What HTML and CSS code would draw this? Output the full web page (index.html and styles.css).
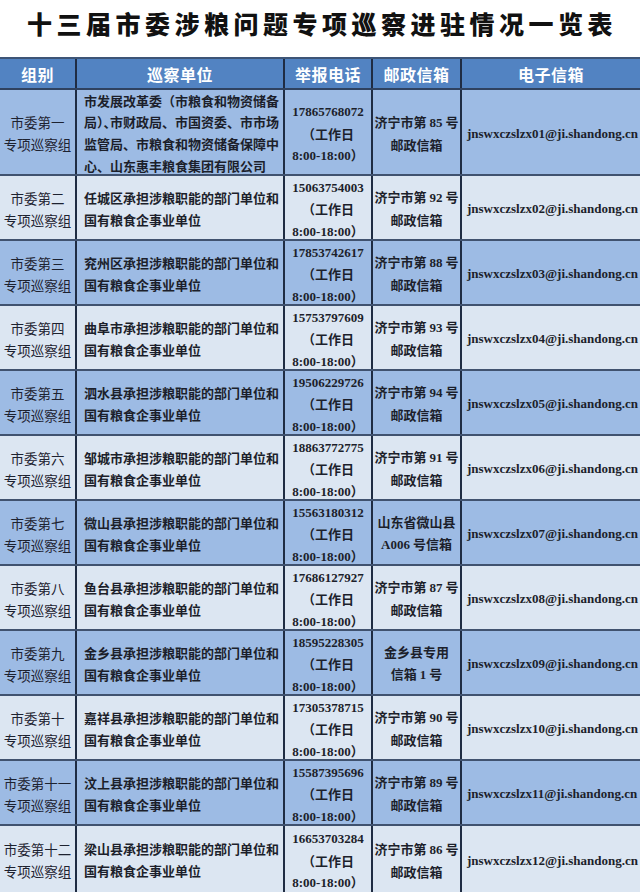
FILE: index.html
```html
<!DOCTYPE html>
<html lang="zh-CN">
<head>
<meta charset="utf-8">
<title>十三届市委涉粮问题专项巡察进驻情况一览表</title>
<link rel="stylesheet" href="styles.css">
</head>
<body>
<h1 class="title">十三届市委涉粮问题专项巡察进驻情况一览表</h1>
<div class="sheet">
  <div class="row head">
    <div class="cell"><div>组别</div></div>
    <div class="cell"><div>巡察单位</div></div>
    <div class="cell"><div>举报电话</div></div>
    <div class="cell"><div>邮政信箱</div></div>
    <div class="cell"><div>电子信箱</div></div>
  </div>

  <div class="row odd first">
    <div class="cell grp"><div>市委第一<br>专项巡察组</div></div>
    <div class="cell unit"><div>市发展改革委（市粮食和物资储备<br>局<span class="halt">）、</span>市财政局、市国资委、市市场<br>监管局、市粮食和物资储备保障中<br>心、山东惠丰粮食集团有限公司</div></div>
    <div class="cell tel"><div><span class="num">17865768072</span><br>（工作日<br><span class="num">8:00-18:00</span>）</div></div>
    <div class="cell post"><div>济宁市第 <span class="num">85</span> 号<br>邮政信箱</div></div>
    <div class="cell mail"><div>jnswxczslzx01@ji.shandong.cn</div></div>
  </div>

  <div class="row even">
    <div class="cell grp"><div>市委第二<br>专项巡察组</div></div>
    <div class="cell unit"><div>任城区承担涉粮职能的部门单位和<br>国有粮食企事业单位</div></div>
    <div class="cell tel"><div><span class="num">15063754003</span><br>（工作日<br><span class="num">8:00-18:00</span>）</div></div>
    <div class="cell post"><div>济宁市第 <span class="num">92</span> 号<br>邮政信箱</div></div>
    <div class="cell mail"><div>jnswxczslzx02@ji.shandong.cn</div></div>
  </div>

  <div class="row odd">
    <div class="cell grp"><div>市委第三<br>专项巡察组</div></div>
    <div class="cell unit"><div>兖州区承担涉粮职能的部门单位和<br>国有粮食企事业单位</div></div>
    <div class="cell tel"><div><span class="num">17853742617</span><br>（工作日<br><span class="num">8:00-18:00</span>）</div></div>
    <div class="cell post"><div>济宁市第 <span class="num">88</span> 号<br>邮政信箱</div></div>
    <div class="cell mail"><div>jnswxczslzx03@ji.shandong.cn</div></div>
  </div>

  <div class="row even">
    <div class="cell grp"><div>市委第四<br>专项巡察组</div></div>
    <div class="cell unit"><div>曲阜市承担涉粮职能的部门单位和<br>国有粮食企事业单位</div></div>
    <div class="cell tel"><div><span class="num">15753797609</span><br>（工作日<br><span class="num">8:00-18:00</span>）</div></div>
    <div class="cell post"><div>济宁市第 <span class="num">93</span> 号<br>邮政信箱</div></div>
    <div class="cell mail"><div>jnswxczslzx04@ji.shandong.cn</div></div>
  </div>

  <div class="row odd">
    <div class="cell grp"><div>市委第五<br>专项巡察组</div></div>
    <div class="cell unit"><div>泗水县承担涉粮职能的部门单位和<br>国有粮食企事业单位</div></div>
    <div class="cell tel"><div><span class="num">19506229726</span><br>（工作日<br><span class="num">8:00-18:00</span>）</div></div>
    <div class="cell post"><div>济宁市第 <span class="num">94</span> 号<br>邮政信箱</div></div>
    <div class="cell mail"><div>jnswxczslzx05@ji.shandong.cn</div></div>
  </div>

  <div class="row even">
    <div class="cell grp"><div>市委第六<br>专项巡察组</div></div>
    <div class="cell unit"><div>邹城市承担涉粮职能的部门单位和<br>国有粮食企事业单位</div></div>
    <div class="cell tel"><div><span class="num">18863772775</span><br>（工作日<br><span class="num">8:00-18:00</span>）</div></div>
    <div class="cell post"><div>济宁市第 <span class="num">91</span> 号<br>邮政信箱</div></div>
    <div class="cell mail"><div>jnswxczslzx06@ji.shandong.cn</div></div>
  </div>

  <div class="row odd">
    <div class="cell grp"><div>市委第七<br>专项巡察组</div></div>
    <div class="cell unit"><div>微山县承担涉粮职能的部门单位和<br>国有粮食企事业单位</div></div>
    <div class="cell tel"><div><span class="num">15563180312</span><br>（工作日<br><span class="num">8:00-18:00</span>）</div></div>
    <div class="cell post"><div>山东省微山县<br><span class="num">A006</span> 号信箱</div></div>
    <div class="cell mail"><div>jnswxczslzx07@ji.shandong.cn</div></div>
  </div>

  <div class="row even">
    <div class="cell grp"><div>市委第八<br>专项巡察组</div></div>
    <div class="cell unit"><div>鱼台县承担涉粮职能的部门单位和<br>国有粮食企事业单位</div></div>
    <div class="cell tel"><div><span class="num">17686127927</span><br>（工作日<br><span class="num">8:00-18:00</span>）</div></div>
    <div class="cell post"><div>济宁市第 <span class="num">87</span> 号<br>邮政信箱</div></div>
    <div class="cell mail"><div>jnswxczslzx08@ji.shandong.cn</div></div>
  </div>

  <div class="row odd">
    <div class="cell grp"><div>市委第九<br>专项巡察组</div></div>
    <div class="cell unit"><div>金乡县承担涉粮职能的部门单位和<br>国有粮食企事业单位</div></div>
    <div class="cell tel"><div><span class="num">18595228305</span><br>（工作日<br><span class="num">8:00-18:00</span>）</div></div>
    <div class="cell post"><div>金乡县专用<br>信箱 <span class="num">1</span> 号</div></div>
    <div class="cell mail"><div>jnswxczslzx09@ji.shandong.cn</div></div>
  </div>

  <div class="row even">
    <div class="cell grp"><div>市委第十<br>专项巡察组</div></div>
    <div class="cell unit"><div>嘉祥县承担涉粮职能的部门单位和<br>国有粮食企事业单位</div></div>
    <div class="cell tel"><div><span class="num">17305378715</span><br>（工作日<br><span class="num">8:00-18:00</span>）</div></div>
    <div class="cell post"><div>济宁市第 <span class="num">90</span> 号<br>邮政信箱</div></div>
    <div class="cell mail"><div>jnswxczslzx10@ji.shandong.cn</div></div>
  </div>

  <div class="row odd">
    <div class="cell grp"><div>市委第十一<br>专项巡察组</div></div>
    <div class="cell unit"><div>汶上县承担涉粮职能的部门单位和<br>国有粮食企事业单位</div></div>
    <div class="cell tel"><div><span class="num">15587395696</span><br>（工作日<br><span class="num">8:00-18:00</span>）</div></div>
    <div class="cell post"><div>济宁市第 <span class="num">89</span> 号<br>邮政信箱</div></div>
    <div class="cell mail"><div>jnswxczslzx11@ji.shandong.cn</div></div>
  </div>

  <div class="row even last">
    <div class="cell grp"><div>市委第十二<br>专项巡察组</div></div>
    <div class="cell unit"><div>梁山县承担涉粮职能的部门单位和<br>国有粮食企事业单位</div></div>
    <div class="cell tel"><div><span class="num">16653703284</span><br>（工作日<br><span class="num">8:00-18:00</span>）</div></div>
    <div class="cell post"><div>济宁市第 <span class="num">86</span> 号<br>邮政信箱</div></div>
    <div class="cell mail"><div>jnswxczslzx12@ji.shandong.cn</div></div>
  </div>
</div>
</body>
</html>
```
FILE: styles.css
```css
html, body {
  margin: 0;
  padding: 0;
  background: #ffffff;
}
body {
  width: 640px;
  font-family: "Noto Sans CJK SC", "Noto Sans", sans-serif;
  color: #1b1d24;
}
.title {
  margin: 0;
  height: 57px;
  box-sizing: border-box;
  padding: 7px 0 0 4px;
  font-size: 25px;
  line-height: 32px;
  font-weight: 900;
  letter-spacing: 4.5px;
  text-align: center;
  color: #111111;
  white-space: nowrap;
}
.sheet {
  display: flex;
  flex-direction: column;
}
.row {
  display: grid;
  grid-template-columns: 77px 208px 88px 89px 1fr;
  height: 65px;
  flex-shrink: 0;
  box-sizing: border-box;
  border-bottom: 2px solid #40526f;
}
.row.head {
  height: 33px;
  background: #5283c2;
  border-top: 2px solid #3e5577;
  border-bottom: 2px solid #2f4260;
}
.row.first {
  height: 86px;
}
.row.last {
  height: 66px;
  border-bottom: none;
}
.row.odd {
  background: #9dbbe4;
}
.row.even {
  background: #dce6f2;
}
.cell {
  border-right: 2px solid #1f2c43;
  display: flex;
  align-items: center;
  justify-content: center;
  white-space: nowrap;
  overflow: hidden;
  color: #1c1f2b;
}
.cell:last-child {
  border-right: none;
}
.head .cell {
  color: #ffffff;
  font-size: 16px;
  font-weight: 700;
  letter-spacing: 0.5px;
}
.grp {
  text-align: center;
  font-size: 13.5px;
  line-height: 22px;
  font-weight: 400;
  color: #1d2230;
  padding-top: 2px;
}
.unit {
  justify-content: flex-start;
  padding-left: 7px;
  font-size: 13px;
  line-height: 21.6px;
  font-weight: 700;
  padding-top: 2px;
}
.halt {
  font-feature-settings: "halt";
}
.tel {
  text-align: center;
  font-size: 13px;
  line-height: 21.5px;
  font-weight: 700;
  padding-top: 3px;
}
.num {
  font-family: "Liberation Serif", serif;
  font-weight: 700;
  font-size: 13px;
}
.post {
  text-align: center;
  font-size: 13px;
  line-height: 22px;
  font-weight: 700;
  padding-top: 2px;
}
.mail {
  justify-content: flex-start;
  padding-left: 5px;
  font-family: "Liberation Serif", serif;
  font-weight: 700;
  font-size: 13px;
  padding-top: 3px;
}
```
